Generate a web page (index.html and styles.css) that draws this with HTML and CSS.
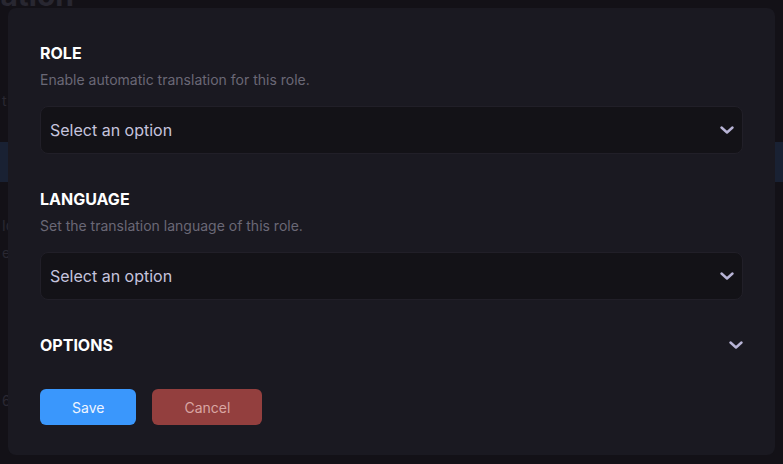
FILE: index.html
```html
<!DOCTYPE html>
<html lang="en">
<head>
<meta charset="utf-8">
<title>Auto Translation</title>
<link rel="stylesheet" href="styles.css">
</head>
<body>
<div class="page">
  <h1 class="page-title">Auto Translation</h1>
  <p class="page-line line-a">t</p>
  <div class="page-banner"></div>
  <p class="page-line line-b">lc</p>
  <p class="page-line line-c">e</p>
  <p class="page-line line-d">6</p>
</div>

<div class="backdrop"></div>

<div class="modal">
  <section class="field">
    <h2 class="field-title">ROLE</h2>
    <p class="field-desc">Enable automatic translation for this role.</p>
    <div class="select">
      <span class="select-text">Select an option</span>
      <svg class="chevron" width="14" height="8" viewBox="0 0 14 8"><path d="M1.5 1.5 L7 6.5 L12.5 1.5" fill="none" stroke="currentColor" stroke-width="2.4" stroke-linecap="round" stroke-linejoin="round"/></svg>
    </div>
  </section>

  <section class="field">
    <h2 class="field-title">LANGUAGE</h2>
    <p class="field-desc">Set the translation language of this role.</p>
    <div class="select">
      <span class="select-text">Select an option</span>
      <svg class="chevron" width="14" height="8" viewBox="0 0 14 8"><path d="M1.5 1.5 L7 6.5 L12.5 1.5" fill="none" stroke="currentColor" stroke-width="2.4" stroke-linecap="round" stroke-linejoin="round"/></svg>
    </div>
  </section>

  <div class="options-row">
    <h2 class="field-title">OPTIONS</h2>
    <svg class="chevron" width="14" height="8" viewBox="0 0 14 8"><path d="M1.5 1.5 L7 6.5 L12.5 1.5" fill="none" stroke="currentColor" stroke-width="2.4" stroke-linecap="round" stroke-linejoin="round"/></svg>
  </div>

  <div class="actions">
    <button class="btn btn-save" type="button">Save</button>
    <button class="btn btn-cancel" type="button">Cancel</button>
  </div>
</div>
</body>
</html>
```

FILE: styles.css
```css
* { box-sizing: border-box; }

html, body {
  margin: 0;
  padding: 0;
  height: 100%;
}

body {
  background: #131218;
  font-family: Inter, "Noto Sans", "Liberation Sans", sans-serif;
  overflow: hidden;
}

.page {
  height: 100%;
  overflow: hidden;
}

.page-title {
  margin: -24px 0 0 -168px;
  font-size: 30px;
  line-height: 38px;
  font-weight: 700;
  color: #34333f;
  white-space: nowrap;
}

.page-line {
  margin: 0;
  padding-left: 2px;
  font-size: 14px;
  line-height: 20px;
  color: #363541;
  white-space: nowrap;
}

.line-a { margin-top: 77px; }

.page-banner {
  margin-top: 31px;
  height: 40px;
  background: #1d2a42;
}

.line-b { margin-top: 34px; font-size: 15px; }
.line-c { margin-top: 7px; }
.line-d { margin-top: 128px; }

.backdrop {
  position: fixed;
  inset: 0;
  background: rgba(19, 18, 24, 0.35);
}

.modal {
  position: fixed;
  left: 8px;
  top: 8px;
  width: 767px;
  padding: 33px 32px 30px;
  background: #1a1921;
  border-radius: 8px;
  display: flex;
  flex-direction: column;
}

.field {
  display: flex;
  flex-direction: column;
  margin-bottom: 33px;
}

.field-title {
  margin: 0;
  font-size: 16px;
  line-height: 24px;
  font-weight: 700;
  color: #ffffff;
}

.field-desc {
  margin: 5px 0 16px;
  font-size: 14px;
  line-height: 20px;
  color: #6a6876;
}

.select {
  height: 48px;
  display: flex;
  align-items: center;
  justify-content: space-between;
  padding: 0 8px 0 9px;
  background: #131217;
  border: 1px solid #211f28;
  border-radius: 8px;
}

.select-text {
  font-size: 16px;
  color: #c6c4de;
}

.chevron {
  display: block;
  color: #b8b4d6;
}

.options-row {
  display: flex;
  align-items: center;
  justify-content: space-between;
  margin-bottom: 32px;
}

.actions {
  display: flex;
  gap: 16px;
}

.btn {
  height: 36px;
  padding: 0 32px;
  border: none;
  border-radius: 6px;
  font-family: Inter, "Noto Sans", "Liberation Sans", sans-serif;
  font-size: 14px;
  cursor: pointer;
}

.btn-save {
  background: #3a97fc;
  color: #eef4ff;
}

.btn-cancel {
  background: #933f3e;
  color: #d9a6a3;
}
```
